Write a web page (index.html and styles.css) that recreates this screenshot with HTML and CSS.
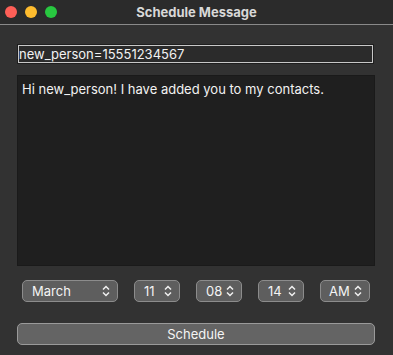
FILE: index.html
```html
<!DOCTYPE html>
<html lang="en">
<head>
    <meta charset="UTF-8">
    <title>Schedule Message</title>
    <link rel="stylesheet" href="styles.css">
</head>
<body>

    <div class="titlebar">
        <div class="lights">
            <span class="light red"></span>
            <span class="light yellow"></span>
            <span class="light green"></span>
        </div>
        <div class="title">Schedule Message</div>
    </div>

    <div class="content">
        <input type="text" class="contact-input" value="new_person=15551234567">

        <textarea class="message" readonly>Hi new_person! I have added you to my contacts.</textarea>

        <div class="pickers">
            <div class="picker month">March <svg class="chev" viewBox="0 0 8 12"><path d="M1 4.5 L4 1.5 L7 4.5 M1 7.5 L4 10.5 L7 7.5"/></svg></div>
            <div class="picker">11 <svg class="chev" viewBox="0 0 8 12"><path d="M1 4.5 L4 1.5 L7 4.5 M1 7.5 L4 10.5 L7 7.5"/></svg></div>
            <div class="picker">08 <svg class="chev" viewBox="0 0 8 12"><path d="M1 4.5 L4 1.5 L7 4.5 M1 7.5 L4 10.5 L7 7.5"/></svg></div>
            <div class="picker">14 <svg class="chev" viewBox="0 0 8 12"><path d="M1 4.5 L4 1.5 L7 4.5 M1 7.5 L4 10.5 L7 7.5"/></svg></div>
            <div class="picker ampm">AM <svg class="chev" viewBox="0 0 8 12"><path d="M1 4.5 L4 1.5 L7 4.5 M1 7.5 L4 10.5 L7 7.5"/></svg></div>
        </div>

        <button class="schedule-btn">Schedule</button>
    </div>

</body>
</html>
```

FILE: styles.css
```css
body {
    margin: 0;
    background-color: #323232;
    font-family: Inter, "Liberation Sans", sans-serif;
    font-size: 13px;
    color: #f2f2f2;
}
.titlebar {
    height: 24px;
    background-color: #2b2b2b;
    border-bottom: 1px solid #8a8a8a;
    display: flex;
    align-items: center;
    position: relative;
}
.lights {
    display: flex;
    gap: 8px;
    padding-left: 5px;
    padding-top: 0;
}
.light {
    width: 12px;
    height: 12px;
    border-radius: 50%;
}
.light.red { background-color: #fe5f57; }
.light.yellow { background-color: #febc2e; }
.light.green { background-color: #28c840; }
.title {
    position: absolute;
    left: 0;
    right: 0;
    text-align: center;
    font-weight: bold;
    color: #d8d8d8;
    font-size: 13px;
}
.content {
    padding: 20px 18px 0 17px;
    display: flex;
    flex-direction: column;
}
.contact-input {
    margin-left: 1px;
    width: 355px;
    height: 18px;
    box-sizing: border-box;
    padding: 0;
    background-color: #2b2b2b;
    border: 1px solid #c8c8c8;
    box-shadow: 0 0 0 1px #1e1e1e;
    color: #f2f2f2;
    font-family: Inter, "Liberation Sans", sans-serif;
    font-size: 13px;
    outline: none;
}
.message {
    margin-top: 12px;
    width: 358px;
    height: 191px;
    box-sizing: border-box;
    background-color: #1f1f1f;
    border: 1px solid #1a1a1a;
    color: #f2f2f2;
    font-family: Inter, "Liberation Sans", sans-serif;
    font-size: 13px;
    padding: 5px 4px;
    resize: none;
    outline: none;
}
.pickers {
    display: flex;
    gap: 16px;
    margin-top: 14px;
    padding-left: 5px;
}
.picker {
    height: 22px;
    width: 46px;
    box-sizing: border-box;
    background-color: #5e5e5e;
    border: 1px solid #8c8c8c;
    border-radius: 5px;
    display: flex;
    align-items: center;
    justify-content: space-between;
    padding: 0 7px 0 9px;
    color: #f4f4f4;
}
.picker.month { width: 96px; }
.picker.ampm { width: 50px; padding-left: 8px; }
.chev {
    width: 8px;
    height: 12px;
    fill: none;
    stroke: #f0f0f0;
    stroke-width: 1.5;
}
.schedule-btn {
    margin-top: 21px;
    width: 358px;
    height: 22px;
    background-color: #646464;
    border: 1px solid #9a9a9a;
    border-radius: 5px;
    color: #f4f4f4;
    font-family: Inter, "Liberation Sans", sans-serif;
    font-size: 13px;
    padding: 0;
}
```
